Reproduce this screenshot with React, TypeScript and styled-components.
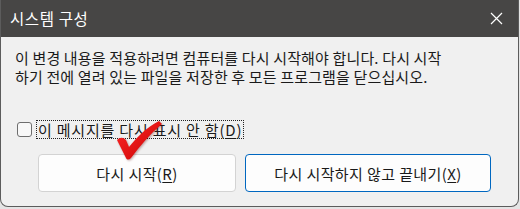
import * as React from 'react'
import styled, { createGlobalStyle } from 'styled-components'

const GlobalStyle = createGlobalStyle`
  html, body {
    margin: 0;
    padding: 0;
    background: #e4e4e4;
  }
  body {
    font-family: "Noto Sans CJK KR", "Noto Sans", sans-serif;
    color: #1a1a1a;
  }
`

const Window = styled.div`
  position: relative;
  box-sizing: border-box;
  width: 519px;
  height: 207px;
  background: #f0f0f0;
  border: 1px solid #5c5c5c;
  border-top: none;
  border-radius: 0 0 8px 8px;
  overflow: hidden;
  display: flex;
  flex-direction: column;
`

const TitleBar = styled.div`
  height: 37px;
  flex: none;
  background: #474645;
  display: flex;
  align-items: center;
  justify-content: space-between;
  padding: 0 15px 0 9px;
`

const Title = styled.span`
  color: #ffffff;
  font-size: 15.5px;
  line-height: 18px;
  letter-spacing: 0.6px;
  margin-top: -1px;
`

const CloseButton = styled.div`
  width: 14px;
  height: 14px;
  display: flex;
  align-items: center;
  justify-content: center;
`

const Body = styled.div`
  flex: 1;
  display: flex;
  flex-direction: column;
  padding: 11px 14px 0 14px;
`

const Message = styled.p`
  margin: 0;
  font-size: 15px;
  line-height: 19px;
  letter-spacing: 0.15px;
`

const CheckRow = styled.label`
  display: flex;
  align-items: center;
  gap: 4px;
  margin: 34px 0 0 2px;
`

const Box = styled.span`
  box-sizing: border-box;
  width: 15px;
  height: 15px;
  border: 1px solid #6e6e6e;
  border-radius: 3px;
  background: #f8f8f8;
`

const FocusLabel = styled.span`
  font-size: 15px;
  line-height: 17px;
  letter-spacing: 0.8px;
  padding: 0 1px;
  border: 1px dotted #222;
`

const Key = styled.u`
  text-underline-offset: 2px;
`

const ButtonRow = styled.div`
  display: flex;
  gap: 9px;
  margin: 15px 0 0 23px;
`

const Button = styled.div<{ $primary?: boolean; $width: number }>`
  box-sizing: border-box;
  width: ${(p) => p.$width}px;
  height: 38px;
  display: flex;
  align-items: center;
  justify-content: center;
  font-size: 15px;
  letter-spacing: 0.4px;
  background: #fdfdfd;
  border: 1px solid ${(p) => (p.$primary ? '#0067c0' : '#d3d3d3')};
  border-radius: 4px;
`

const Mark = styled.svg`
  position: absolute;
  left: 110px;
  top: 116px;
  filter: drop-shadow(1px 1px 1px rgba(90, 0, 0, 0.35));
`

export default function App() {
  return (
    <>
      <GlobalStyle />
      <Window>
        <TitleBar>
          <Title>시스템 구성</Title>
          <CloseButton>
            <svg width="13" height="13" viewBox="0 0 13 13">
              <path d="M1 1 L12 12 M12 1 L1 12" stroke="#ffffff" strokeWidth="1.2" />
            </svg>
          </CloseButton>
        </TitleBar>
        <Body>
          <Message>
            이 변경 내용을 적용하려면 컴퓨터를 다시 시작해야 합니다. 다시 시작
            <br />
            하기 전에 열려 있는 파일을 저장한 후 모든 프로그램을 닫으십시오.
          </Message>
          <CheckRow>
            <Box />
            <FocusLabel>
              이 메시지를 다시 표시 안 함(<Key>D</Key>)
            </FocusLabel>
          </CheckRow>
          <ButtonRow>
            <Button $width={198}>
              다시 시작(<Key>R</Key>)
            </Button>
            <Button $primary $width={246}>
              다시 시작하지 않고 끝내기(<Key>X</Key>)
            </Button>
          </ButtonRow>
        </Body>
        <Mark width="56" height="48" viewBox="0 0 56 48">
          <defs>
            <linearGradient id="red" x1="0" y1="0" x2="1" y2="1">
              <stop offset="0" stopColor="#ff2a2a" />
              <stop offset="1" stopColor="#c80000" />
            </linearGradient>
          </defs>
          <path
            d="M6 24 C9 21 12 21 15 24 L18 31 C26 21 36 11 48 5 L51 8 C39 18 29 30 20 42 C18 44 16 44 15 42 Z"
            fill="url(#red)"
          />
        </Mark>
      </Window>
    </>
  )
}
